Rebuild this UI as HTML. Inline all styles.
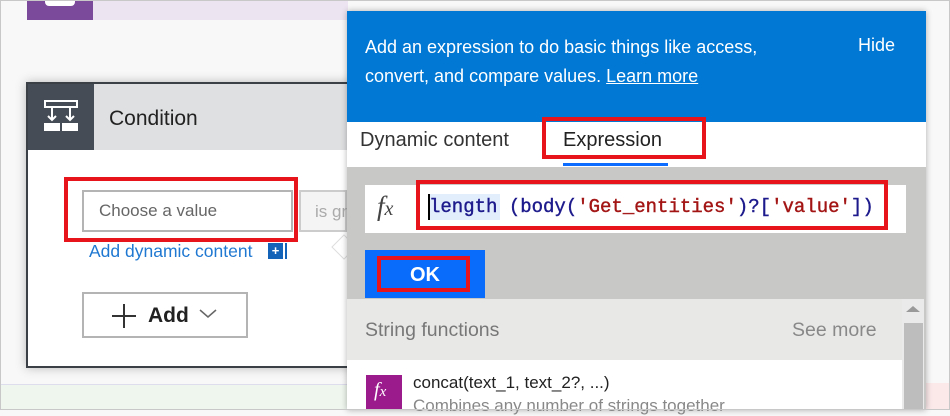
<!DOCTYPE html>
<html><head><style>
*{margin:0;padding:0;box-sizing:border-box}
body{width:950px;height:410px;position:relative;overflow:hidden;background:#f8f8f8;font-family:"Liberation Sans",sans-serif}
.a{position:absolute}
.mono{font-family:"Liberation Mono",monospace}
</style></head><body>
<div class="a" style="left:0;top:0;width:950px;height:410px;border:1px solid #c8c8c8;z-index:20;pointer-events:none"></div>
<div class="a" style="left:27px;top:0;width:66px;height:20px;background:#7b4a9b"></div>
<div class="a" style="left:45px;top:0;width:30px;height:6px;background:#fff;border-radius:0 0 4px 4px"></div>
<div class="a" style="left:93px;top:0;width:255px;height:20px;background:#ede4f1"></div>
<div class="a" style="left:1px;top:384px;width:346px;height:25px;background:#eef6ee;border-top:1px solid #dde"></div>
<div class="a" style="left:926px;top:383px;width:23px;height:26px;background:#fbe9ea"></div>
<div class="a" style="left:26px;top:82px;width:330px;height:286px;border:2px solid #3b4047;background:#fff;box-shadow:0 0 10px rgba(0,0,0,.25)"></div>
<div class="a" style="left:28px;top:84px;width:66px;height:66px;background:#454c55"></div>
<svg class="a" style="left:43px;top:98px" width="36" height="36" viewBox="0 0 36 36" fill="none" stroke="#fff" stroke-width="2">
<rect x="2" y="3" width="32" height="6"/><path d="M9 9v13M27 9v13M5 18l4 4 4-4M23 18l4 4 4-4"/><rect x="2" y="26" width="14" height="6" fill="#fff"/><rect x="20" y="26" width="14" height="6" fill="#fff"/></svg>
<div class="a" style="left:94px;top:84px;width:253px;height:66px;background:#dfe0e1"></div>
<div class="a" style="left:109px;top:107px;font-size:21px;color:#222">Condition</div>
<div class="a" style="left:82px;top:190px;width:211px;height:42px;border:2px solid #b4b4b4;background:#fff"></div>
<div class="a" style="left:99px;top:201px;font-size:17px;color:#666">Choose a value</div>
<div class="a" style="left:299px;top:190px;width:48px;height:42px;border:2px solid #ccc;background:#f4f4f4"></div>
<div class="a" style="left:315px;top:202px;font-size:17px;color:#aaa">is gr</div>
<div class="a" style="left:64px;top:177px;width:234px;height:65px;border:4px solid #e8141c"></div>
<div class="a" style="left:89px;top:241px;font-size:17.5px;color:#1f78d1">Add dynamic content</div>
<div class="a" style="left:268px;top:243px;width:15px;height:16px;background:#1363b8;color:#fff;font-size:13px;font-weight:bold;text-align:center;line-height:16px">+</div>
<div class="a" style="left:285px;top:243px;width:2px;height:16px;background:#1363b8"></div>
<div class="a" style="left:82px;top:292px;width:166px;height:46px;border:2px solid #b4b4b4;background:#fff"></div>
<svg class="a" style="left:111px;top:303px" width="26" height="26"><path d="M13 1v24M1 13h24" stroke="#333" stroke-width="2"/></svg>
<div class="a" style="left:148px;top:304px;font-size:21px;font-weight:bold;color:#222">Add</div>
<svg class="a" style="left:199px;top:309px" width="18" height="10"><path d="M1 1l8 7 8-7" stroke="#666" stroke-width="1.5" fill="none"/></svg>
<div class="a" style="left:335px;top:238px;width:18px;height:18px;background:#fff;border:1px solid #ddd;transform:rotate(45deg)"></div>
<div class="a" style="left:347px;top:11px;width:579px;height:399px;background:#c8c9c7;box-shadow:0 0 6px rgba(0,0,0,.3)"></div>
<div class="a" style="left:347px;top:11px;width:579px;height:111px;background:#0078d4"></div>
<div class="a" style="left:365px;top:33px;font-size:18px;color:#fff;line-height:29px">Add an expression to do basic things like access,<br>convert, and compare values. <span style="text-decoration:underline">Learn more</span></div>
<div class="a" style="left:858px;top:35px;font-size:18px;color:#fff">Hide</div>
<div class="a" style="left:347px;top:122px;width:579px;height:45px;background:#fff"></div>
<div class="a" style="left:360px;top:129px;font-size:20px;color:#333">Dynamic content</div>
<div class="a" style="left:563px;top:129px;font-size:20px;color:#222">Expression</div>
<div class="a" style="left:563px;top:163px;width:105px;height:3px;background:#0b6cff"></div>
<div class="a" style="left:542px;top:117px;width:164px;height:42px;border:4px solid #e8141c"></div>
<div class="a" style="left:365px;top:185px;width:541px;height:48px;background:#fff"></div>
<div class="a" style="left:377px;top:191px;font-family:'Liberation Serif',serif;font-style:italic;font-size:27px;color:#444">f<span style="font-size:20px">x</span></div>
<div class="a" style="left:430px;top:194px;width:70px;height:26px;background:#e2eefc"></div>
<div class="a" style="left:428px;top:194px;width:2px;height:26px;background:#000"></div>
<div class="a mono" style="left:429px;top:196px;font-size:19px;color:#1d1a8c;white-space:pre;-webkit-text-stroke:0.4px">length (body(<span style="color:#a31515">'Get_entities'</span>)?[<span style="color:#a31515">'value'</span>])</div>
<div class="a" style="left:416px;top:180px;width:472px;height:50px;border:4px solid #e8141c"></div>
<div class="a" style="left:365px;top:250px;width:120px;height:48px;background:#0a6cfa"></div>
<div class="a" style="left:377px;top:256px;width:93px;height:36px;border:4px solid #e8141c"></div>
<div class="a" style="left:410px;top:264px;font-size:20px;font-weight:bold;color:#fff">OK</div>
<div class="a" style="left:347px;top:299px;width:555px;height:61px;background:#e8e9e7"></div>
<div class="a" style="left:365px;top:319px;font-size:19.5px;color:#777">String functions</div>
<div class="a" style="left:792px;top:319px;font-size:19.5px;color:#888">See more</div>
<div class="a" style="left:347px;top:360px;width:555px;height:50px;background:#fff"></div>
<div class="a" style="left:902px;top:299px;width:22px;height:111px;background:#eaeaea"></div>
<div class="a" style="left:906px;top:306px;width:0;height:0;border-left:7px solid transparent;border-right:7px solid transparent;border-bottom:6px solid #999"></div>
<div class="a" style="left:904px;top:323px;width:19px;height:87px;background:#bdbdbd"></div>
<div class="a" style="left:366px;top:375px;width:36px;height:35px;background:#9b1a8c"></div>
<div class="a" style="left:374px;top:379px;font-family:'Liberation Serif',serif;font-style:italic;font-size:20px;color:#fff">f<span style="font-size:15px">x</span></div>
<div class="a" style="left:413px;top:373px;font-size:17px;color:#222">concat(text_1, text_2?, ...)</div>
<div class="a" style="left:413px;top:396px;font-size:17px;color:#888">Combines any number of strings together</div>
</body></html>
